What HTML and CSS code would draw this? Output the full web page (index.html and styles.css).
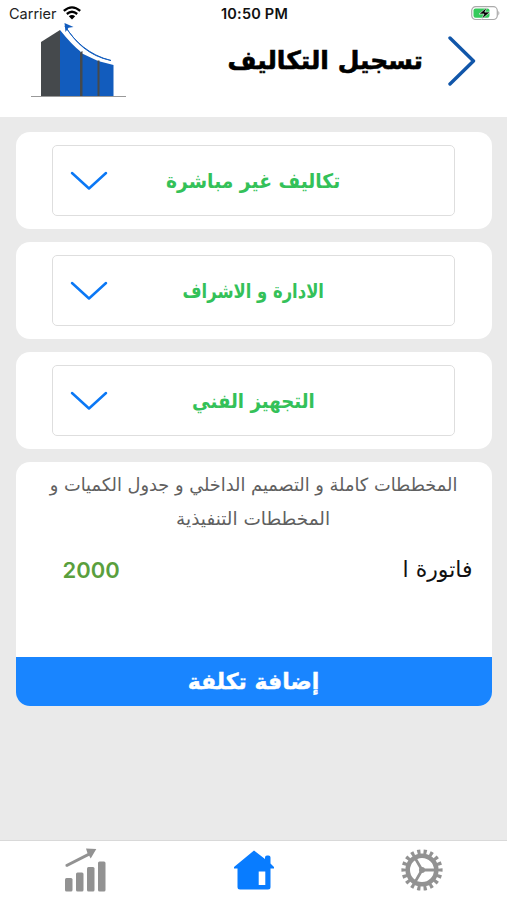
FILE: index.html
```html
<!DOCTYPE html>
<html lang="ar" dir="rtl">
<head>
<meta charset="utf-8">
<meta name="viewport" content="width=device-width, initial-scale=1">
<title>تسجيل التكاليف</title>
<link rel="stylesheet" href="styles.css">
</head>
<body>
<header class="header">
  <div class="status" dir="ltr">
    <span class="carrier">Carrier
      <svg class="wifi" width="18" height="14" viewBox="0 0 18 14" fill="none" stroke="#000" stroke-width="2.3"><path d="M.8 4.900Q9-2.200 17.200 4.900M3.800 8Q9 3.600 14.200 8"/><path d="M9 13.400 5.800 10.200Q9 7.700 12.200 10.200Z" fill="#000" stroke="none"/></svg>
    </span>
    <span class="clock">10:50 PM</span>
    <svg class="battery" width="31" height="15" viewBox="0 0 31 15"><rect x="2.700" y=".7" width="25.600" height="12.800" rx="4" fill="#fff" stroke="#aaa" stroke-width="1.200"/><rect x="4.500" y="2.500" width="16" height="9.200" rx="2" fill="#35ca5b"/><path d="M29.300 4.700q2.200 2.400 0 4.800z" fill="#aaa"/><path d="M18 1.300 10 8h5l-2.400 5.300 8.400-7.200h-5.200z" fill="#000" stroke="#fff" stroke-width=".6"/></svg>
  </div>
  <div class="titlebar">
    <svg class="back" width="28" height="50" viewBox="0 0 28 50" fill="none" stroke="#1156a9" stroke-width="3.4" stroke-linecap="round" stroke-linejoin="round"><path d="M2 2 25.500 25 2 48"/></svg>
    <h1><span class="fit">تسجيل التكاليف</span></h1>
    <svg class="logo" width="96" height="76" viewBox="0 0 96 76">
      <path d="M10 19 29 7V73.500H10Z" fill="#45494c"/>
      <path d="M29 7Q41 22 49.500 28.500V73.500H29Z" fill="#125cbd"/>
      <path d="M49 29.500 67 38 82.500 42V73.500H49Z" fill="#125cbd"/>
      <path d="M49 29.500 51.500 28V73.500H49ZM66.500 37.500H68.500V73.500H66.500Z" fill="#45494c"/>
      <path d="M34 3C43 18 58 32 80 37.500 58 33 45 20 34 3Z" fill="#125cbd" stroke="#125cbd" stroke-width=".9"/>
      <path d="M33.500 0 42.500 4 37.500 4.700 34.500 9Z" fill="#125cbd"/>
      <path d="M0 73.500H95" stroke="#999" stroke-width="1"/>
    </svg>
  </div>
</header>
<main>
  <section class="card picker">
    <button class="select"><span class="fit s1">تكاليف غير مباشرة</span><svg class="chevron" width="38" height="20" viewBox="0 0 38 20"><path d="M2 2 19 17.500 36 2"/></svg></button>
  </section>
  <section class="card picker">
    <button class="select"><span class="fit s2">الادارة و الاشراف</span><svg class="chevron" width="38" height="20" viewBox="0 0 38 20"><path d="M2 2 19 17.500 36 2"/></svg></button>
  </section>
  <section class="card picker">
    <button class="select"><span class="fit s3">التجهيز الفني</span><svg class="chevron" width="38" height="20" viewBox="0 0 38 20"><path d="M2 2 19 17.500 36 2"/></svg></button>
  </section>
  <section class="card invoice">
    <p class="desc"><span class="fit d1">المخططات كاملة و التصميم الداخلي و جدول الكميات و</span><span class="fit d2">المخططات التنفيذية</span></p>
    <div class="row"><span class="fit">فاتورة ا</span><strong class="amount">2000</strong></div>
    <button class="add"><span class="fit">إضافة تكلفة</span></button>
  </section>
</main>
<nav class="tabs">
  <svg width="42" height="42" viewBox="-21 -21 42 42" fill="none" stroke="#929292"><circle r="14.300" stroke-width="4.600"/><circle r="18.200" stroke-width="4.800" pathLength="36" stroke-dasharray="1 1" stroke-dashoffset=".5"/><path d="M0 0H14M0 0-7-12.100M0 0-7 12.100" stroke-width="2.800"/><circle r="3" fill="#929292" stroke="none"/></svg>
  <svg width="40" height="40" viewBox="0 0 40 40"><path d="M20 .5 31 9V7.500Q31 5.500 33 5.500H34.500Q36.500 5.500 36.500 7.500V13.500L40 17V18.500H36.500V37Q36.500 39.500 34 39.500H6Q3.500 39.500 3.500 37V18.500H0V17Z" fill="#087cff"/><path d="M24.700 21.500H31.300V35H24.700Z" fill="#fff"/></svg>
  <svg width="42" height="44" viewBox="0 0 42 44" fill="#929292"><rect x="1" y="30" width="7.500" height="13.500" rx="1.500"/><rect x="12" y="24.500" width="7.500" height="19" rx="1.500"/><rect x="23" y="19" width="7.500" height="24.500" rx="1.500"/><rect x="34" y="13.500" width="7.500" height="30" rx="1.500"/><path d="M1.500 16.500 23.500 5.200 22 .5 32.300 1 26.700 10.500 25.200 7.700 3 19Q.8 18.500 1.500 16.500Z"/></svg>
</nav>
</body>
</html>
```
FILE: styles.css
```css
* { box-sizing: border-box; }
body { margin: 0; height: 900px; display: flex; flex-direction: column; background: #eaeaea; font-family: "DejaVu Sans", sans-serif; overflow: hidden; }
button { font: inherit; border: 0; padding: 0; }
.fit { display: inline-block; white-space: nowrap; }
.header { height: 117px; background: #fff; }
.status { height: 24px; padding: 5px 7px 0 9px; display: grid; grid-template-columns: 1fr auto 1fr; align-items: start; font: 14.5px/18px Inter, sans-serif; color: #222; }
.carrier { display: flex; gap: 6px; }
.wifi { margin-top: 1px; }
.clock { font-weight: 600; color: #111; letter-spacing: .2px; }
.battery { justify-self: end; margin-top: 1px; }
.titlebar { display: flex; height: 76px; padding: 0 31px; }
.back { margin-top: 12px; flex: none; }
h1 { flex: 1; margin: 0; padding: 14px 25px 0 0; font-size: 25px; line-height: 46px; text-align: right; -webkit-text-stroke: .6px #000; }
.logo { flex: none; margin-top: -1.5px; }
main { flex: 1; padding: 14.5px 15.5px 0; display: flex; flex-direction: column; gap: 12.5px; }
.card { background: #fff; border-radius: 14px; overflow: hidden; flex: none; }
.picker { height: 97.5px; padding: 13.5px 36.5px; }
.select { width: 100%; height: 71px; display: grid; grid-template-columns: 1fr auto 1fr; align-items: center; border: 1.5px solid #dedede; border-radius: 5px; background: #fff; color: #34c159; font-weight: 700; font-size: 20px; }
.select .fit { grid-column: 2; }
.s1 { transform: scaleX(.935); }
.s2 { transform: scaleX(.82); }
.s3 { transform: scaleX(.91); }
.chevron { justify-self: end; margin-left: 17px; fill: none; stroke: #0b78f5; stroke-width: 2.5; stroke-linecap: round; stroke-linejoin: round; }
.invoice { height: 244.5px; display: flex; flex-direction: column; }
.desc { margin: 0; padding-top: 6px; display: flex; flex-direction: column; align-items: center; color: #606060; font-size: 18px; line-height: 34.5px; }
.d1 { transform: scaleX(.987); }
.d2 { transform: scaleX(1.025); }
.row { display: flex; justify-content: space-between; align-items: center; height: 40px; margin-top: 13px; padding: 0 19px 0 47px; font-size: 22px; color: #111; }
.amount { font: 600 22px/40px Inter, sans-serif; color: #5a9f3d; }
.add { margin-top: auto; height: 49px; background: #1985ff; color: #fff; font-weight: 700; font-size: 22px; -webkit-text-stroke: .4px #fff; }
.tabs { height: 60px; padding: 0 64px 2px; border-top: 1px solid #d9d9d9; background: #fff; display: flex; justify-content: space-between; align-items: center; }
```
